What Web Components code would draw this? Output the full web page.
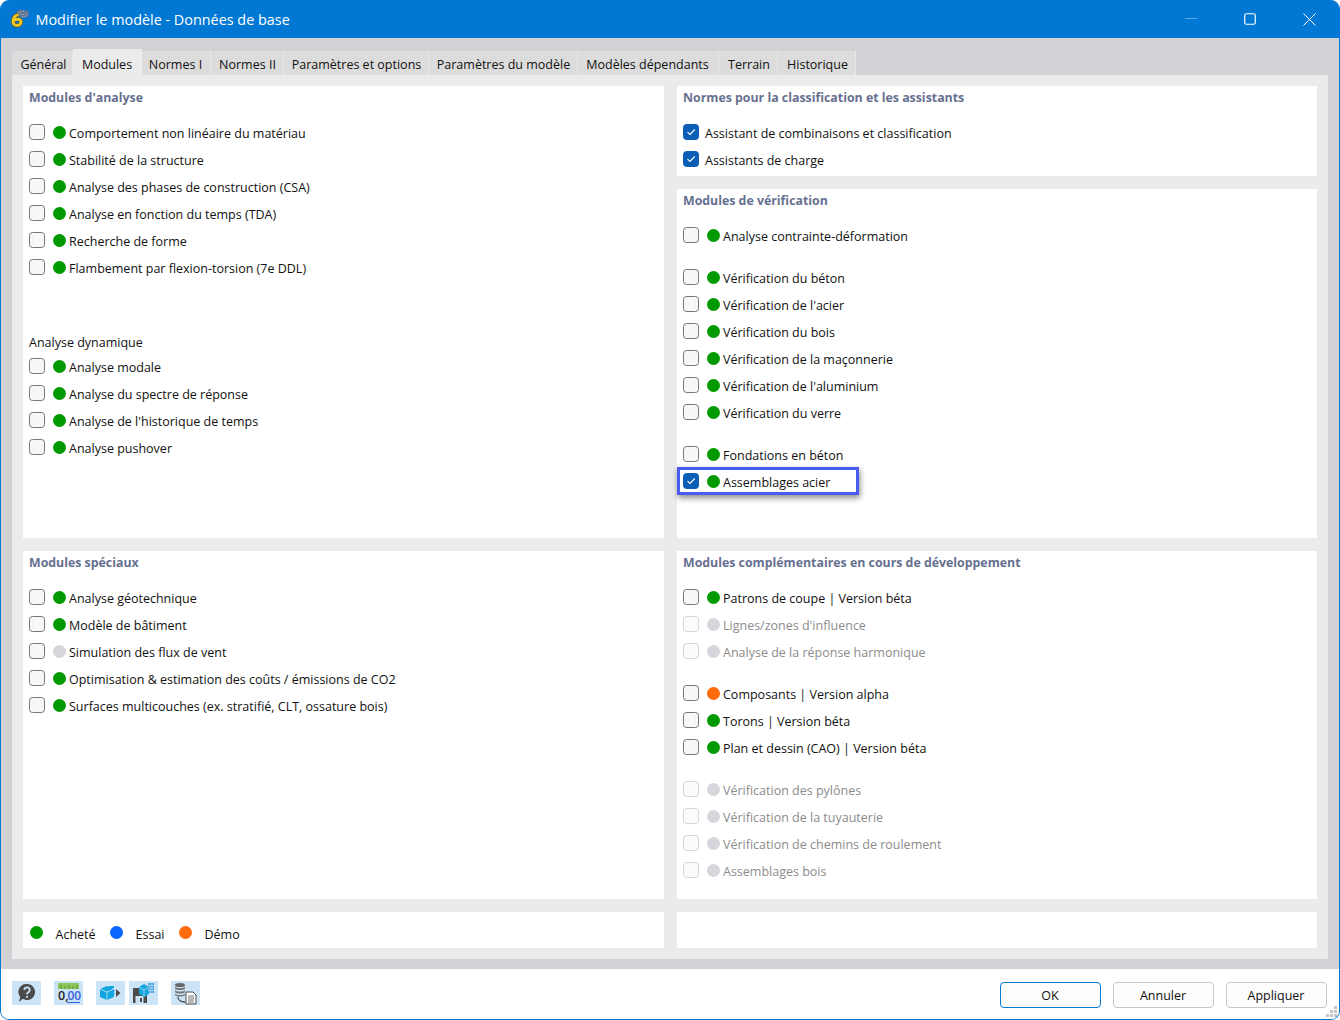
<!DOCTYPE html>
<html lang="fr">
<head>
<meta charset="utf-8">
<title>Modifier le modèle</title>
<style>
  html, body { margin: 0; padding: 0; background: #fff; }
  body { font: 12.5px "Open Sans", "Noto Sans", sans-serif; color: #111; }
  .spacer-15 { display: block; height: 15px; }
  .spacer-49 { display: block; height: 49px; }
</style>
</head>
<body>

<dlg-window>
  <dlg-titlebar slot="title">Modifier le modèle - Données de base</dlg-titlebar>

  <dlg-tabs slot="tabs" active="1"
    labels="Général|Modules|Normes I|Normes II|Paramètres et options|Paramètres du modèle|Modèles dépendants|Terrain|Historique"></dlg-tabs>

  <mod-panel heading="Modules d'analyse" style="grid-area:a">
    <mod-row dot="green">Comportement non linéaire du matériau</mod-row>
    <mod-row dot="green">Stabilité de la structure</mod-row>
    <mod-row dot="green">Analyse des phases de construction (CSA)</mod-row>
    <mod-row dot="green">Analyse en fonction du temps (TDA)</mod-row>
    <mod-row dot="green">Recherche de forme</mod-row>
    <mod-row dot="green">Flambement par flexion-torsion (7e DDL)</mod-row>
    <span class="spacer-49"></span>
    <mod-label>Analyse dynamique</mod-label>
    <mod-row dot="green">Analyse modale</mod-row>
    <mod-row dot="green">Analyse du spectre de réponse</mod-row>
    <mod-row dot="green">Analyse de l'historique de temps</mod-row>
    <mod-row dot="green">Analyse pushover</mod-row>
  </mod-panel>

  <mod-stack style="grid-area:b">
    <mod-panel heading="Normes pour la classification et les assistants" style="height:90px;flex:none">
      <mod-row checked>Assistant de combinaisons et classification</mod-row>
      <mod-row checked>Assistants de charge</mod-row>
    </mod-panel>
    <mod-panel heading="Modules de vérification">
      <mod-row dot="green">Analyse contrainte-déformation</mod-row>
      <span class="spacer-15"></span>
      <mod-row dot="green">Vérification du béton</mod-row>
      <mod-row dot="green">Vérification de l'acier</mod-row>
      <mod-row dot="green">Vérification du bois</mod-row>
      <mod-row dot="green">Vérification de la maçonnerie</mod-row>
      <mod-row dot="green">Vérification de l'aluminium</mod-row>
      <mod-row dot="green">Vérification du verre</mod-row>
      <span class="spacer-15"></span>
      <mod-row dot="green">Fondations en béton</mod-row>
      <mod-row dot="green" checked highlight>Assemblages acier</mod-row>
    </mod-panel>
  </mod-stack>

  <mod-panel heading="Modules spéciaux" style="grid-area:c">
    <mod-row dot="green">Analyse géotechnique</mod-row>
    <mod-row dot="green">Modèle de bâtiment</mod-row>
    <mod-row dot="grey">Simulation des flux de vent</mod-row>
    <mod-row dot="green">Optimisation &amp; estimation des coûts / émissions de CO2</mod-row>
    <mod-row dot="green">Surfaces multicouches (ex. stratifié, CLT, ossature bois)</mod-row>
  </mod-panel>

  <mod-panel heading="Modules complémentaires en cours de développement" style="grid-area:d">
    <mod-row dot="green">Patrons de coupe | Version béta</mod-row>
    <mod-row dot="grey" disabled>Lignes/zones d'influence</mod-row>
    <mod-row dot="grey" disabled>Analyse de la réponse harmonique</mod-row>
    <span class="spacer-15"></span>
    <mod-row dot="orange">Composants | Version alpha</mod-row>
    <mod-row dot="green">Torons | Version béta</mod-row>
    <mod-row dot="green">Plan et dessin (CAO) | Version béta</mod-row>
    <span class="spacer-15"></span>
    <mod-row dot="grey" disabled>Vérification des pylônes</mod-row>
    <mod-row dot="grey" disabled>Vérification de la tuyauterie</mod-row>
    <mod-row dot="grey" disabled>Vérification de chemins de roulement</mod-row>
    <mod-row dot="grey" disabled>Assemblages bois</mod-row>
  </mod-panel>

  <mod-legend style="grid-area:e"></mod-legend>
  <mod-legend empty style="grid-area:f"></mod-legend>

  <dlg-footer slot="footer"></dlg-footer>
</dlg-window>

<script>
function makeEl(tag, css, html) {
  customElements.define(tag, class extends HTMLElement {
    constructor() {
      super();
      this.attachShadow({ mode: 'open' });
    }
    connectedCallback() {
      this.shadowRoot.innerHTML = `<style>${css}</style>${typeof html === 'function' ? html(this) : html}`;
    }
  });
}

const DOTS = { green: '#009a00', grey: '#d6d6dc', orange: '#ff6a0d', blue: '#0a64ff' };

makeEl('dlg-window', `
  :host {
    display: flex; flex-direction: column;
    width: 1340px; height: 1020px; box-sizing: border-box;
    border: 1.5px solid #0078d4; border-top: 0;
    border-radius: 9px; overflow: hidden; background: #d2d1d6;
  }
  .body { flex: 1; padding: 13px 11px 10px 10.5px; display: flex; flex-direction: column; min-height: 0; }
  .page {
    flex: 1; background: #ebebeb; padding: 11px; display: grid; gap: 13px;
    grid-template-columns: 641px 640px;
    grid-template-rows: 452px 348px 36px;
    grid-template-areas: "a b" "c d" "e f";
  }
`, `
  <slot name="title"></slot>
  <div class="body">
    <slot name="tabs"></slot>
    <div class="page"><slot></slot></div>
  </div>
  <slot name="footer"></slot>
`);

makeEl('dlg-titlebar', `
  :host {
    display: flex; align-items: center; flex: none; height: 38px;
    background: #0078d4; color: #fff; font-size: 14.4px; margin: 0 -1.5px;
  }
  .logo { margin-left: 10px; width: 20px; height: 20px; flex: none; }
  .t { margin-left: 6px; flex: 1; }
  .b { width: 59px; height: 38px; display: flex; align-items: center; justify-content: center; }
  .b:last-child { margin-right: 2px; }
`, `
  <svg class="logo" viewBox="0 0 20 20">
    <path d="M4 6 L9 .5 L19 2 L18 8 L12 9 L8 7 Z" fill="#5f7290"/>
    <path d="M8 4 L15 1.500 M10 6 L18 4 M12 8 L18 6.500" stroke="#9fb0c8" stroke-width="1" stroke-dasharray="1.500 1" fill="none"/>
    <path d="M8.500 5.500 C4.500 6.500 3 10 3 13 C3 17.500 11 17.500 11 13 C11 9.500 5.500 9.500 3.500 12" fill="none" stroke="#5a5320" stroke-width="4.200"/>
    <path d="M8.500 5.500 C4.500 6.500 3 10 3 13 C3 17.500 11 17.500 11 13 C11 9.500 5.500 9.500 3.500 12" fill="none" stroke="#f2c824" stroke-width="2.800"/>
  </svg>
  <span class="t"><slot></slot></span>
  <span class="b"><svg width="14" height="2" viewBox="0 0 14 2"><path d="M1 .5H13" stroke="#fff" stroke-opacity=".35"/></svg></span>
  <span class="b"><svg width="12" height="12" viewBox="0 0 12 12"><rect x=".75" y=".75" width="10.500" height="10.500" rx="1.500" fill="none" stroke="#fff" stroke-width="1.200"/></svg></span>
  <span class="b"><svg width="13" height="13" viewBox="0 0 13 13"><path d="M.5 .5L12.500 12.500M12.500 .5L.5 12.500" stroke="#fff" stroke-width="1"/></svg></span>
`);

makeEl('dlg-tabs', `
  :host { display: flex; align-items: flex-end; height: 24px; flex: none; }
  .tab {
    box-sizing: border-box; height: 24px; line-height: 28px; background: #dcdcdc;
    text-align: center; border-right: 1px solid #e8e8e8; white-space: nowrap;
  }
  .tab.on { height: 26px; line-height: 31px; background: #ebebeb; border-right: 0; }
`, self => {
  const widths = [61, 69, 69, 73, 145, 149, 141, 59, 78];
  const nudge = [4, 0, 0, 2, 2, 2, 0, 3, 3];
  return self.getAttribute('labels').split('|').map((l, i) =>
    `<div class="tab${i == self.getAttribute('active') ? ' on' : ''}" style="width:${widths[i]}px;padding-left:${nudge[i]}px">${l}</div>`).join('');
});

makeEl('mod-stack', `
  :host { display: flex; flex-direction: column; gap: 13px; min-height: 0; }
  ::slotted(mod-panel) { flex: 1; }
`, `<slot></slot>`);

makeEl('mod-panel', `
  :host { display: block; background: #fff; padding: 0 6px; min-height: 0; }
  h2 { margin: 0 0 11px .5px; height: 22px; line-height: 23px; font-size: 12.35px; font-weight: 700; color: #66708f; }
`, self => `<h2>${self.getAttribute('heading')}</h2><slot></slot>`);

makeEl('mod-label', `
  :host { display: block; height: 23px; line-height: 25px; padding-left: .5px; }
`, `<slot></slot>`);

makeEl('mod-row', `
  :host { display: flex; align-items: center; height: 27px; position: relative; white-space: nowrap; }
  .box {
    box-sizing: border-box; width: 16px; height: 16px; border-radius: 3.500px; flex: none;
    border: 1px solid #777; background: #f7f7f7; margin-top: -1px;
    display: flex; align-items: center; justify-content: center;
  }
  .box.on { background: #0a5fb4; border-color: #0a5fb4; }
  .box.off { border-color: #d6d6d6; background: #fbfbfb; }
  .dot { width: 13px; height: 13px; border-radius: 50%; margin: 0 0 0 8px; flex: none; }
  .nodot { margin-left: 3px; }
  .txt { margin-left: 3.5px; margin-top: 1px; }
  .txt.off { color: #8c8c8c; }
  .hl {
    position: absolute; left: -6px; top: -1px; width: 176px; height: 22px;
    border: 3px solid #4a5cf0; box-shadow: 1px 3px 6px rgba(0,0,0,.45);
  }
`, self => {
  const dot = self.getAttribute('dot');
  const on = self.hasAttribute('checked'), off = self.hasAttribute('disabled');
  return `
    <span class="box ${on ? 'on' : ''} ${off ? 'off' : ''}">${on ? '<svg width="10" height="10" viewBox="0 0 10 10"><path d="M1.500 5.200L4 7.500L8.700 2.500" fill="none" stroke="#fff" stroke-width="1.100"/></svg>' : ''}</span>
    ${dot ? `<span class="dot" style="background:${DOTS[dot]}"></span>` : '<span class="nodot"></span>'}
    <span class="txt ${off ? 'off' : ''}"><slot></slot></span>
    ${self.hasAttribute('highlight') ? '<span class="hl"></span>' : ''}`;
});

makeEl('mod-legend', `
  :host { display: flex; align-items: center; background: #fff; padding: 6px 0 0 7px; box-sizing: border-box; }
  .dot { width: 13px; height: 13px; border-radius: 50%; margin-top: -2px; }
  .txt { margin: 2px 14px 0 13px; }
`, self => self.hasAttribute('empty') ? '' : `
  <span class="dot" style="background:${DOTS.green}"></span><span class="txt">Acheté</span>
  <span class="dot" style="background:${DOTS.blue}"></span><span class="txt">Essai</span>
  <span class="dot" style="background:${DOTS.orange}"></span><span class="txt">Démo</span>`);

makeEl('dlg-footer', `
  :host {
    display: flex; align-items: center; flex: none; height: 50px; box-sizing: border-box;
    background: #fff; padding: 0 12.500px 0 10.500px; position: relative;
  }
  .ico { width: 29px; height: 24px; background: #cce4f7; display: flex; align-items: center; justify-content: center; margin: -3px 13px 0 0; }
  .ico.tight { margin-right: 4px; }
  .fill { flex: 1; }
  .btn {
    box-sizing: border-box; width: 101px; height: 26px; margin: 1.500px 0 0 12px; border: 1px solid #c8c8c8; border-radius: 4px;
    background: #fdfdfd; text-align: center; line-height: 26px;
  }
  .btn.def { border-color: #0078d4; }
  .grip { position: absolute; right: 1px; bottom: 1px; }
  text { font-family: "Open Sans", sans-serif; font-weight: 600; }
`, `
  <span class="ico"><svg width="22" height="22" viewBox="0 0 22 22">
    <path d="M12 2a8 8 0 1 1-4.200 14.800L4 20l1.200-5A8 8 0 0 1 12 2z" fill="#4b4b4b"/>
    <path d="M9.300 8c0-3.500 5.500-3.500 5.500 0 0 2.200-2.800 2.200-2.800 4.200" fill="none" stroke="#cce4f7" stroke-width="1.800"/>
    <circle cx="12" cy="14.800" r="1.100" fill="#cce4f7"/>
  </svg></span>
  <span class="ico"><svg width="25" height="22" viewBox="0 0 25 22">
    <rect x="2" y="1" width="21" height="6" fill="#8cc65a"/>
    <path d="M5 3v4M9 4v3M13 3v4M17 4v3M21 3v4" stroke="#4c8a2c" stroke-width=".8"/>
    <text x="2" y="18" font-size="12.500" fill="#222">0,</text>
    <text x="11.500" y="18" font-size="12" fill="#3a62d8">00</text>
    <path d="M11 20.500H24" stroke="#3a62d8"/>
  </svg></span>
  <span class="ico tight"><svg width="29" height="24" viewBox="0 0 29 24">
    <path d="M4 8l7-3 7 3v8l-7 3-7-3z" fill="#12a6de"/>
    <path d="M4 8l7 3 7-3M11 11v8" fill="none" stroke="#cce4f7" stroke-width=".8"/>
    <path d="M13 5h5v2h-5zM17 9h2v1h-2zM17 12h2v1h-2z" fill="#12a6de"/>
    <path d="M20 8l4.500 4-4.500 4z" fill="#4b4b4b"/>
  </svg></span>
  <span class="ico"><svg width="29" height="24" viewBox="0 0 29 24">
    <path d="M4 7h12l2 2v13H4z" fill="#4b4b4b"/>
    <rect x="6.500" y="15" width="8" height="7" fill="#cce4f7"/>
    <rect x="11" y="17" width="2" height="4" fill="#4b4b4b"/>
    <path d="M10 6l5-3 5 3v7l-5 3-5-3z" fill="#12a6de"/>
    <path d="M10 6l5 3 5-3M15 9v7" fill="none" stroke="#cce4f7" stroke-width=".7"/>
    <rect x="19" y="2" width="6" height="10" fill="#3f9ee0"/>
    <path d="M19 4.500h6M19 7h6M19 9.500h6M21 2v10M23 2v10" stroke="#cce4f7" stroke-width=".6"/>
  </svg></span>
  <span class="ico"><svg width="29" height="24" viewBox="0 0 29 24">
    <ellipse cx="9" cy="4" rx="5" ry="2" fill="#666"/>
    <path d="M4 5.500c1 2 9 2 10 0v2c-1 2-9 2-10 0zM4 9c1 2 9 2 10 0v2c-1 2-9 2-10 0zM4 12.500c1 2 9 2 10 0v1.500c-1 2-9 2-10 0z" fill="#777"/>
    <path d="M7 16c0 3 3 5 7 5" fill="none" stroke="#4b4b4b" stroke-width="1.300"/>
    <path d="M15 11h7l3 3v9H15z" fill="#fff" stroke="#4b4b4b"/>
    <path d="M17 15h6M17 17h6M17 19h6M17 21h6" stroke="#4b4b4b" stroke-width=".8"/>
  </svg></span>
  <span class="fill"></span>
  <span class="btn def">OK</span>
  <span class="btn">Annuler</span>
  <span class="btn">Appliquer</span>
  <svg class="grip" width="12" height="12" viewBox="0 0 12 12" fill="#c4c4c4">
    <rect x="8" y="0" width="3" height="3"/><rect x="4" y="4" width="3" height="3"/><rect x="8" y="4" width="3" height="3"/>
    <rect x="0" y="8" width="3" height="3"/><rect x="4" y="8" width="3" height="3"/><rect x="8" y="8" width="3" height="3"/>
  </svg>
`);
</script>
</body>
</html>
